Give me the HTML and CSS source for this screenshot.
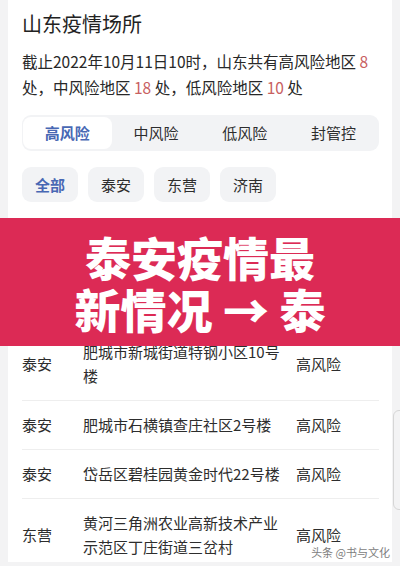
FILE: index.html
```html
<!DOCTYPE html>
<html lang="zh-CN">
<head>
  <meta charset="UTF-8" />
  <title>山东疫情场所</title>
  <link rel="stylesheet" href="styles.css">
</head>

<body>
  <div class="card">
    <h1 class="title">山东疫情场所</h1>
    <p class="summary">
      截止2022年10月11日10时，山东共有高风险地区 <span class="num">8</span>
      处，中风险地区 <span class="num">18</span> 处，低风险地区 <span class="num">10</span> 处
    </p>

    <div class="tabs">
      <div class="tab active">高风险</div>
      <div class="tab">中风险</div>
      <div class="tab">低风险</div>
      <div class="tab">封管控</div>
    </div>

    <div class="chips">
      <div class="chip active">全部</div>
      <div class="chip">泰安</div>
      <div class="chip">东营</div>
      <div class="chip">济南</div>
    </div>

    <div class="banner">泰安疫情最<br>新情况 → 泰</div>

    <div class="table">
      <div class="row first">
        <div>泰安</div>
        <div>肥城市新城街道特钢小区10号楼</div>
        <div>高风险</div>
      </div>
      <div class="row">
        <div>泰安</div>
        <div>肥城市石横镇查庄社区2号楼</div>
        <div>高风险</div>
      </div>
      <div class="row">
        <div>泰安</div>
        <div>岱岳区碧桂园黄金时代22号楼</div>
        <div>高风险</div>
      </div>
      <div class="row last">
        <div>东营</div>
        <div>黄河三角洲农业高新技术产业示范区丁庄街道三岔村</div>
        <div>高风险</div>
      </div>
    </div>
  </div>

  <div class="side-handle"></div>
  <div class="watermark">头条 @书与文化</div>
</body>
</html>
```

FILE: styles.css
```css
* {
  box-sizing: border-box;
  margin: 0;
  padding: 0;
}

body {
  background-color: rgb(243, 243, 244);
  font-family: "Noto Sans CJK SC", "Noto Sans", sans-serif;
  color: rgb(40, 40, 40);
  height: 566px;
  overflow: hidden;
  position: relative;
}

.card {
  background-color: rgb(255, 255, 255);
  margin-left: 8px;
  margin-right: 8px;
  padding-left: 14px;
  padding-right: 13px;
  padding-top: 9px;
  padding-bottom: 3px;
}

.title {
  font-size: 20px;
  font-weight: 400;
  line-height: 30px;
  color: rgb(34, 34, 34);
}

.summary {
  margin-top: 9px;
  font-size: 15.5px;
  line-height: 26px;
  color: rgb(40, 40, 40);
}

.num {
  color: rgb(200, 96, 95);
}

.tabs {
  margin-top: 15px;
  display: grid;
  grid-template-columns: repeat(4, 1fr);
  background-color: rgb(242, 243, 245);
  border-radius: 9px;
  padding: 2px 1px;
}

.tab {
  height: 32px;
  line-height: 32px;
  text-align: center;
  font-size: 15px;
  color: rgb(45, 45, 45);
  border-radius: 8px;
}

.tab.active {
  background-color: rgb(255, 255, 255);
  color: rgb(72, 104, 180);
  font-weight: 700;
}

.chips {
  margin-top: 16px;
  display: flex;
  gap: 10px;
}

.chip {
  height: 35px;
  line-height: 35px;
  padding-left: 13px;
  padding-right: 13px;
  font-size: 15px;
  color: rgb(45, 45, 45);
  background-color: rgb(242, 243, 245);
  border-radius: 9px;
}

.chip.active {
  color: rgb(72, 104, 180);
  font-weight: 700;
}

.banner {
  position: relative;
  margin-top: 16px;
  margin-left: -22px;
  margin-right: -21px;
  margin-bottom: -6px;
  height: 128px;
  padding-top: 12px;
  background-color: rgb(220, 42, 85);
  color: rgb(255, 255, 255);
  text-align: center;
  font-size: 46px;
  font-weight: 900;
  line-height: 52px;
}

.row {
  display: grid;
  grid-template-columns: 53px 205px 1fr;
  column-gap: 8px;
  align-items: center;
  padding-top: 12px;
  padding-bottom: 12px;
  border-bottom: 1px solid rgb(238, 238, 238);
  font-size: 15px;
  line-height: 24px;
  color: rgb(45, 45, 45);
}

.row.first {
  padding-top: 0;
}

.row.last {
  padding-bottom: 0;
  border-bottom: none;
}

.side-handle {
  position: absolute;
  left: 393px;
  top: 410px;
  width: 14px;
  height: 100px;
  border: 1px solid rgb(214, 214, 214);
  border-radius: 6px;
}

.watermark {
  position: absolute;
  right: 10px;
  bottom: 6px;
  font-size: 11px;
  color: rgb(125, 125, 125);
}
```
